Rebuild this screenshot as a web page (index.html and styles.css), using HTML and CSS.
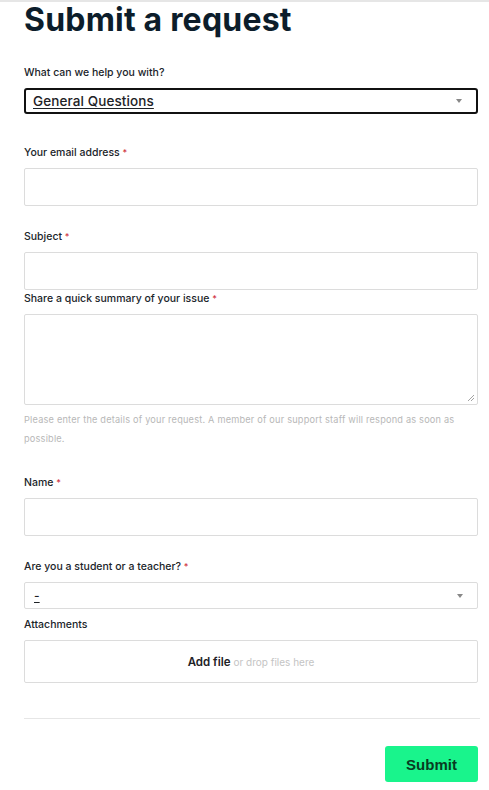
FILE: index.html
```html
<!DOCTYPE html>
<html lang="en">
<head>
<meta charset="utf-8">
<title>Submit a request</title>
<link rel="stylesheet" href="styles.css">
</head>
<body>
<div class="topline"></div>
<main class="page">
  <h1 class="title">Submit a request</h1>
  <form class="form">
    <div class="field f-type">
      <label class="label">What can we help you with?</label>
      <div class="select select-focus"><span class="select-value">General Questions</span><span class="caret"></span></div>
    </div>
    <div class="field f-email">
      <label class="label">Your email address <span class="req">*</span></label>
      <div class="input"></div>
    </div>
    <div class="field f-subject">
      <label class="label">Subject <span class="req">*</span></label>
      <div class="input"></div>
    </div>
    <div class="field f-summary">
      <label class="label">Share a quick summary of your issue <span class="req">*</span></label>
      <div class="textarea">
        <svg class="grip" width="8" height="8" viewBox="0 0 8 8"><path d="M7 1 L1 7 M7 4 L4 7" stroke="#999" stroke-width="0.9" fill="none"/></svg>
      </div>
      <p class="hint">Please enter the details of your request. A member of our support staff will respond as soon as possible.</p>
    </div>
    <div class="field f-name">
      <label class="label">Name <span class="req">*</span></label>
      <div class="input"></div>
    </div>
    <div class="field f-role">
      <label class="label">Are you a student or a teacher? <span class="req">*</span></label>
      <div class="select select-plain"><span class="select-value dash">-</span><span class="caret"></span></div>
    </div>
    <div class="field f-attach">
      <label class="label">Attachments</label>
      <div class="dropzone"><span class="add">Add file</span> <span class="drop">or drop files here</span></div>
    </div>
    <div class="rule"></div>
    <div class="actions">
      <button type="button" class="submit">Submit</button>
    </div>
  </form>
</main>
</body>
</html>
```

FILE: styles.css
```css
* { box-sizing: border-box; }
html, body { margin: 0; padding: 0; background: #fff; }
body { font-family: "Inter", "Noto Sans", sans-serif; color: #1b1f24; }
.topline { height: 2px; background: #e6e6e6; }
.page { padding: 0 11px 0 24px; }
.title {
  margin: 0;
  height: 38px;
  line-height: 36px;
  font-size: 32px;
  font-weight: 700;
  color: #0c1d2b;
  letter-spacing: 0.2px;
}
.form { display: flex; flex-direction: column; }
.field { display: flex; flex-direction: column; }
.label {
  display: block;
  font-size: 10.5px;
  line-height: 14px;
  font-weight: 500;
  color: #20242a;
  margin-bottom: 8px;
}
.req { color: #d0343f; font-size: 9px; }
.f-type { margin-top: 26px; }
.f-email { margin-top: 32px; }
.f-subject { margin-top: 24px; }
.f-summary { margin-top: 2px; }
.f-name { margin-top: 28px; }
.f-role { margin-top: 24px; }
.f-attach { margin-top: 9px; }
.select {
  display: flex;
  align-items: center;
  justify-content: space-between;
  background: #fff;
  border-radius: 3px;
  padding: 0 14px 0 7px;
}
.select-focus { height: 26px; border: 2px solid #111; }
.select-plain { height: 27px; border: 1px solid #dcdcdc; border-radius: 2px; padding-left: 9px; }
.select-value {
  font-size: 13.5px;
  color: #1e2226;
  text-decoration: underline;
  text-underline-offset: 2px;
  font-weight: 500;
  letter-spacing: 0.1px;
}
.dash { font-size: 12px; }
.caret {
  width: 0; height: 0;
  border-left: 3.5px solid transparent;
  border-right: 3.5px solid transparent;
  border-top: 4px solid #888;
}
.input { height: 38px; border: 1px solid #dcdcdc; border-radius: 2px; }
.textarea {
  height: 91px;
  border: 1px solid #dcdcdc;
  border-radius: 2px;
  display: flex;
  align-items: flex-end;
  justify-content: flex-end;
  padding: 0 2px 2px 0;
}
.grip { display: block; }
.hint {
  margin: 5px 0 0;
  font-size: 9.2px;
  line-height: 19px;
  letter-spacing: 0.2px;
  color: #b8b8b8;
}
.dropzone {
  height: 43px;
  border: 1px solid #dcdcdc;
  border-radius: 2px;
  display: flex;
  align-items: center;
  justify-content: center;
  gap: 3px;
  font-size: 11.5px;
}
.add { font-weight: 600; color: #1e2226; }
.drop { color: #c4c4c4; font-size: 10px; }
.rule { margin-top: 35px; height: 1px; background: #e6e6e6; margin-right: -2px; }
.actions { display: flex; justify-content: flex-end; margin-top: 27px; }
.submit {
  width: 93px;
  height: 36px;
  border: none;
  border-radius: 3px;
  background: #19f48c;
  color: #083b22;
  font-family: "Liberation Sans", Arial, sans-serif;
  font-weight: 700;
  font-size: 15px;
  cursor: pointer;
}
```
